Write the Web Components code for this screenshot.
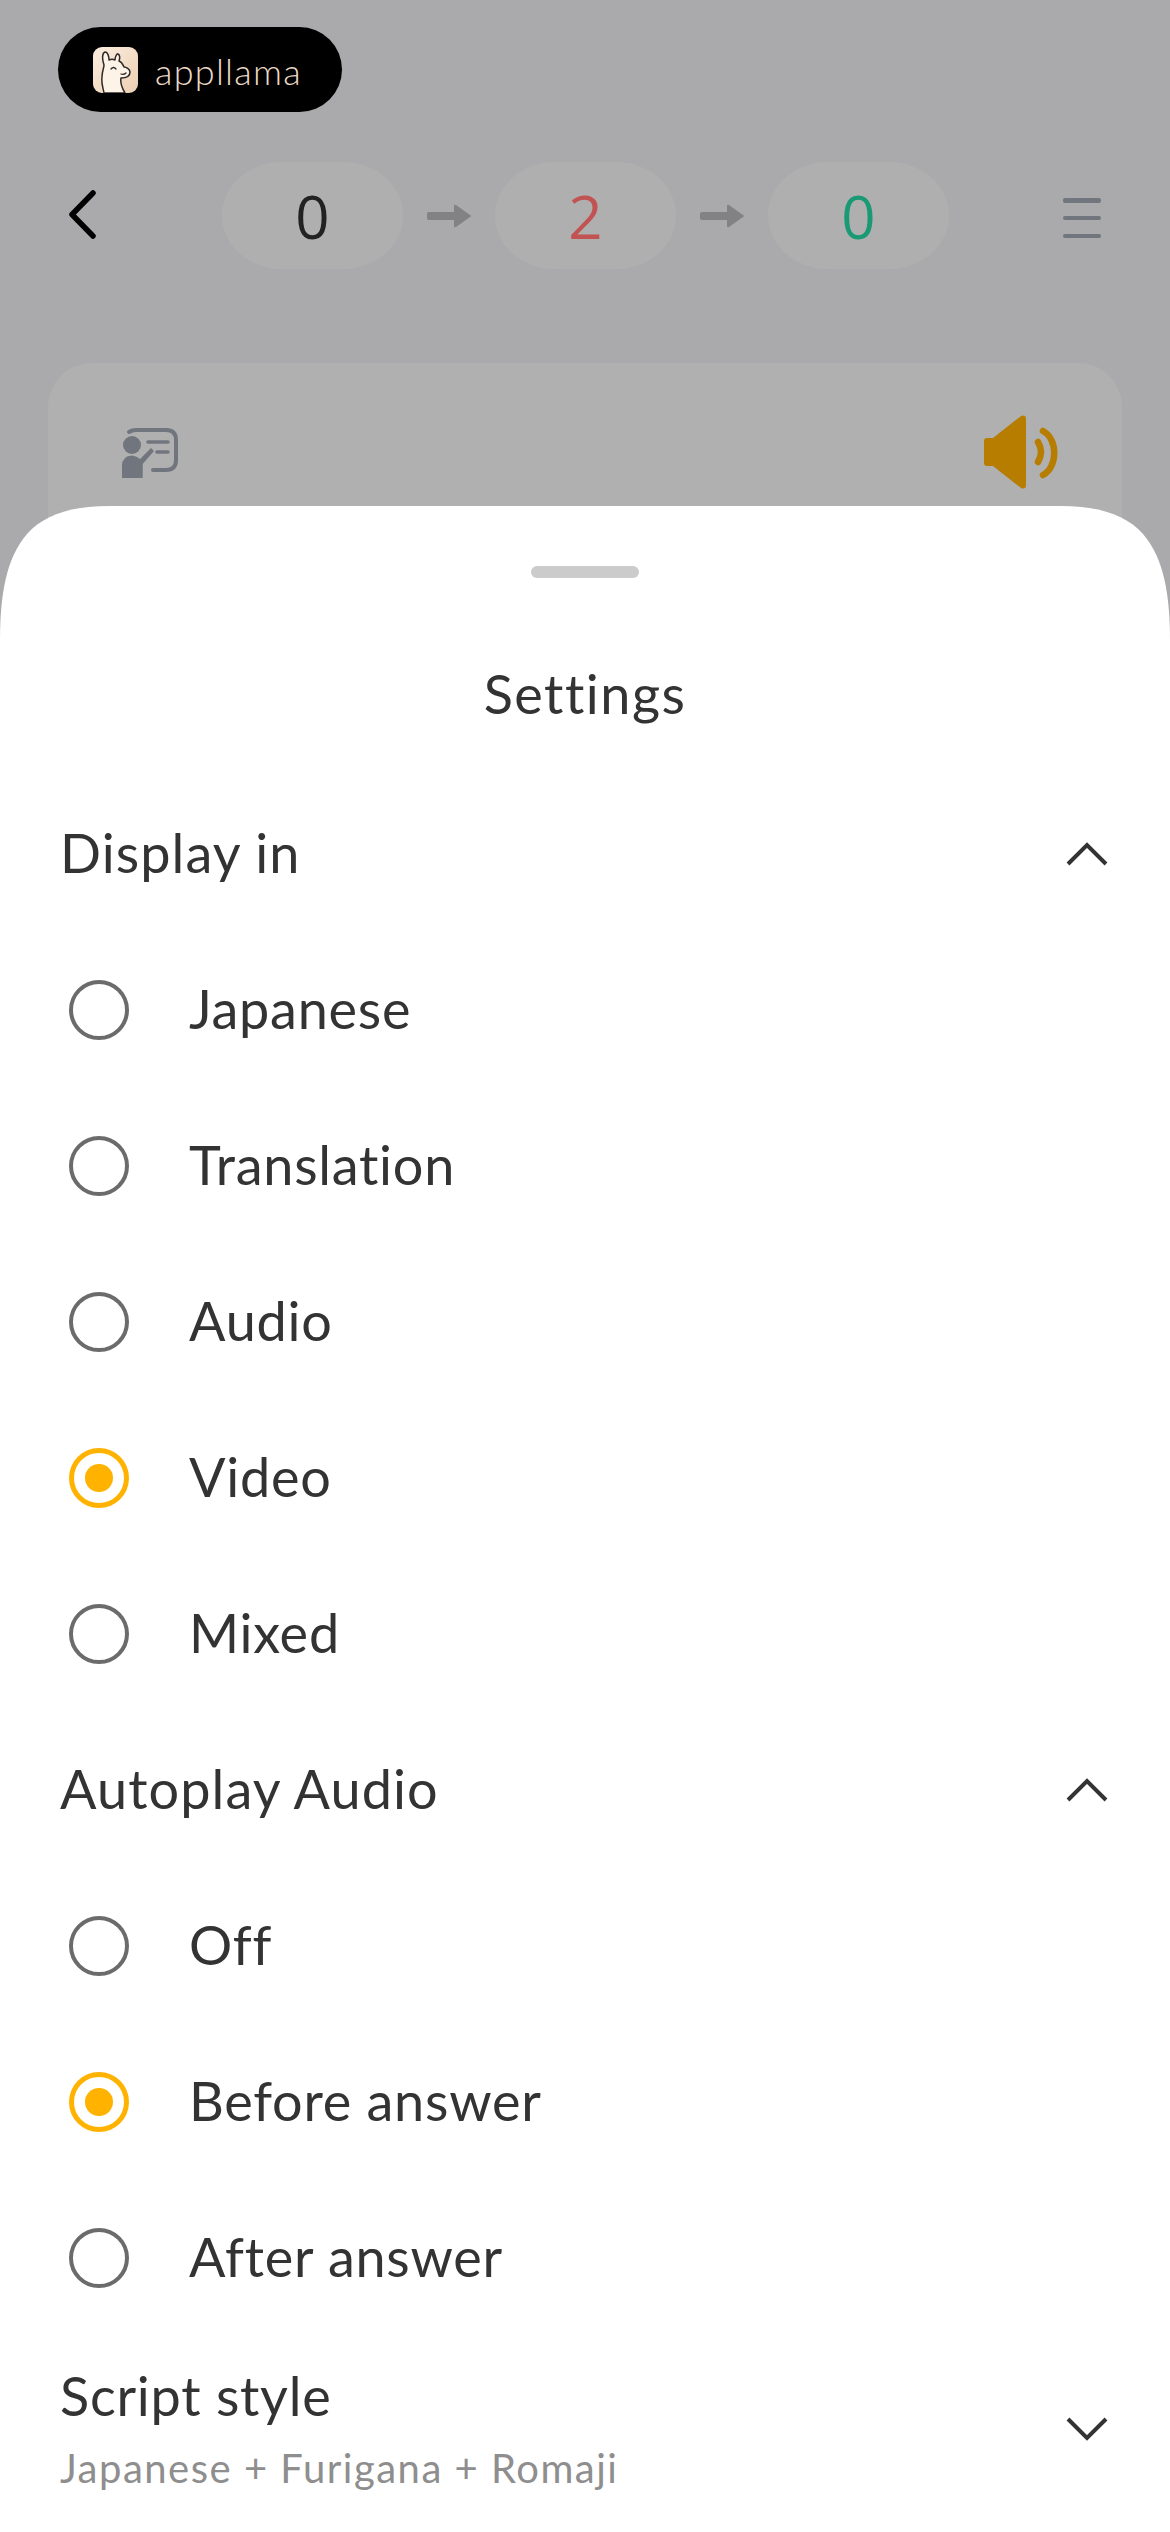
<!DOCTYPE html>
<html>
<head>
<meta charset="utf-8">
<style>
    html, body { margin: 0; padding: 0; }
    body { width: 1170px; height: 2532px; overflow: hidden; position: relative; background: #aaaaac; font-family: Lato, sans-serif; }
</style>
</head>
<body>

<template id="app-logo-template">
    <style>
        :host { display: flex; align-items: center; width: 284px; height: 85px; box-sizing: border-box; padding-left: 35px; gap: 17px; background: #000; border-radius: 43px; }
        svg { display: block; }
        span { color: #ecd9c6; font: 300 36px Lato, sans-serif; letter-spacing: 1.25px; margin-top: 3px; }
    </style>
    <svg width="45" height="46" viewBox="0 0 45 46">
        <defs><linearGradient id="bg" x1="0" y1="0" x2="1" y2="1"><stop offset="0" stop-color="#fbeee0"/><stop offset="1" stop-color="#eccfb2"/></linearGradient></defs>
        <rect width="45" height="46" rx="9" fill="url(#bg)"/>
        <path d="M11 46C10 40 8 36 9 30 9 24 11 21 11 18 9 12 9 6 12 5 15 5 16 10 16 13 18 12 20 12 22 13 22 10 24 6 25 7 27 8 27 11 26 14 29 15 30 18 31 20 33 20 37 22 37 25 37 29 33 31 28 31 27 36 29 41 32 46z" fill="#fdf3e7" stroke="#2f2a28" stroke-width="1.500" stroke-linejoin="round"/>
        <path d="M18 22q2.500-3 5 0M28 27q3 1 5-1" fill="none" stroke="#2f2a28" stroke-width="1.300" stroke-linecap="round"/>
    </svg>
    <span>appllama</span>
</template>

<template id="step-pill-template">
    <style>
        :host { display: flex; align-items: center; justify-content: center; width: 181px; height: 107px; background: #afafaf; border-radius: 60px / 53px; font: 400 60px "Open Sans", sans-serif; color: var(--pill-color, #222); }
    </style>
    <slot></slot>
</template>

<template id="step-arrow-template">
    <style>
        :host { display: block; width: 45px; height: 24px; }
        svg { display: block; }
    </style>
    <svg width="45" height="24" viewBox="0 0 45 24">
        <path d="M2 8H27V2q0-2 2-1L43 11q2 1 0 2L29 23q-2 1-2-1V16H2q-2 0-2-2V10q0-2 2-2z" fill="#828284"/>
    </svg>
</template>

<template id="top-bar-template">
    <style>
        :host { display: flex; align-items: center; width: 1170px; box-sizing: border-box; height: 107px; }
        .back { margin-left: 66px; width: 34px; height: 54px; display: block; }
        .steps { display: flex; align-items: center; gap: 23.500px; margin-left: 122px; }
        .menu { margin-left: 114px; width: 38px; height: 40px; display: flex; flex-direction: column; justify-content: space-between; margin-top: 5px; }
        .menu i { display: block; height: 4.500px; border-radius: 2px; background: #71757e; }
    </style>
    <svg class="back" viewBox="0 0 34 54"><path d="M27 4 6 25.500 27 47" fill="none" stroke="#000" stroke-width="5.500" stroke-linecap="round" stroke-linejoin="round"/></svg>
    <div class="steps"><slot></slot></div>
    <div class="menu"><i></i><i></i><i></i></div>
</template>

<template id="lesson-card-template">
    <style>
        :host { display: block; width: 1074px; height: 300px; margin-left: 48px; background: #b0b0b0; border-radius: 44px; position: relative; }
        .row { display: flex; justify-content: space-between; align-items: center; padding: 52px 63px 0 74px; }
        svg { display: block; }
        .teacher { margin-top: 2px; }
    </style>
    <div class="row">
        <svg class="teacher" width="56" height="50" viewBox="0 0 56 50">
            <path d="M7 4Q10 2 14 2H44Q54 2 54 12V32Q54 42 44 42H31" fill="none" stroke="#71757e" stroke-width="4" stroke-linecap="round"/>
            <circle cx="10" cy="17" r="9" fill="#71757e"/>
            <path d="M0 50V38Q0 28 10 27.500 15 28 18 31L29 20 32 23 20.700 36V50z" fill="#71757e"/>
            <path d="M26 14H46M35 24H46" stroke="#71757e" stroke-width="3.500" stroke-linecap="round"/>
        </svg>
        <svg width="75" height="74" viewBox="0 0 75 74">
            <path d="M0 26Q0 23 3 23H9L37 1Q42-1 42 4V70Q42 75 37 73L9 51H3Q0 51 0 48z" fill="#b67d00"/>
            <path d="M54 27Q60 37 54 47" fill="none" stroke="#b67d00" stroke-width="6.500" stroke-linecap="round"/>
            <path d="M59 16C74 24 74 52 59 60" fill="none" stroke="#b67d00" stroke-width="6.500" stroke-linecap="round"/>
        </svg>
    </div>
</template>

<template id="bottom-sheet-template">
    <style>
        :host { display: block; position: absolute; left: 0; right: 0; top: 506px; bottom: 0; background: #fff; clip-path: path("M0 134C0 90 6 52 27 28C44 9 70 0 110 0H1060C1100 0 1126 9 1143 28C1164 52 1170 90 1170 134V2026H0Z"); overflow: hidden; color: #333; font-family: Lato, sans-serif; font-variant-ligatures: none; letter-spacing: 0.75px; }
        .handle { width: 108px; height: 12px; border-radius: 6px; background: #cbcbcb; margin: 60px auto 0; }
        h2 { margin: 0; font-size: 54px; font-weight: 400; line-height: 74px; letter-spacing: 1.5px; text-align: center; padding-top: 79px; padding-bottom: 45px; }
    </style>
    <div class="handle"></div>
    <h2>Settings</h2>
    <slot></slot>
</template>

<template id="setting-header-template">
    <style>
        :host { display: flex; align-items: center; justify-content: space-between; height: 156px; padding: 0 62px 0 60px; font-size: 54px; letter-spacing: 1.1px; }
        slot { display: block; margin-bottom: 3px; }
        svg { display: block; }
    </style>
    <slot></slot>
    <svg width="42" height="24" viewBox="0 0 42 24"><path d="M2 22 21 3 40 22" fill="none" stroke="#333" stroke-width="4"/></svg>
</template>

<template id="radio-option-template">
    <style>
        :host { display: flex; align-items: center; height: 156px; padding-left: 69px; gap: 60px; font-size: 54px; }
        slot { display: block; margin-bottom: 3px; }
        .dot { width: 60px; height: 60px; box-sizing: border-box; border-radius: 50%; border: 4.500px solid #6b6b6b; display: flex; align-items: center; justify-content: center; }
        :host([checked]) .dot { border: 5px solid #ffb300; }
        :host([checked]) .dot::after { content: ""; width: 28px; height: 28px; border-radius: 50%; background: #ffb300; }
    </style>
    <div class="dot"></div>
    <slot></slot>
</template>

<template id="setting-select-template">
    <style>
        :host { display: flex; align-items: center; justify-content: space-between; padding: 0 62px 0 60px; }
        .main { font-size: 54px; line-height: 74px; }
        .sub { font-size: 40px; line-height: 56px; color: #8e8e8e; margin-top: 7px; letter-spacing: 1.5px; }
        svg { display: block; margin-top: 2px; }
    </style>
    <div>
        <div class="main"><slot></slot></div>
        <div class="sub"><slot name="value"></slot></div>
    </div>
    <svg width="42" height="24" viewBox="0 0 42 24"><path d="M2 2 21 21 40 2" fill="none" stroke="#333" stroke-width="4"/></svg>
</template>

<app-logo style="margin:27px 0 0 58px"></app-logo>
<top-bar style="margin-top:50px">
    <step-pill>0</step-pill>
    <step-arrow></step-arrow>
    <step-pill style="--pill-color:#c25353">2</step-pill>
    <step-arrow></step-arrow>
    <step-pill style="--pill-color:#1a9a74">0</step-pill>
</top-bar>
<lesson-card style="margin-top:94px"></lesson-card>

<bottom-sheet>
    <setting-header>Display in</setting-header>
    <radio-option>Japanese</radio-option>
    <radio-option>Translation</radio-option>
    <radio-option>Audio</radio-option>
    <radio-option checked>Video</radio-option>
    <radio-option>Mixed</radio-option>
    <setting-header>Autoplay Audio</setting-header>
    <radio-option>Off</radio-option>
    <radio-option checked>Before answer</radio-option>
    <radio-option>After answer</radio-option>
    <setting-select style="margin-top:23px">Script style<span slot="value">Japanese + Furigana + Romaji</span></setting-select>
</bottom-sheet>

<script>
    function defineFromTemplate(tag, templateId) {
        let template = document.querySelector("#" + templateId);
        customElements.define(tag, class extends HTMLElement {
            constructor() {
                super();
                this.shadow = this.attachShadow({mode: 'open'});
                this.shadow.appendChild(template.content.cloneNode(true));
            }
        });
    }

    defineFromTemplate("app-logo", "app-logo-template");
    defineFromTemplate("step-pill", "step-pill-template");
    defineFromTemplate("step-arrow", "step-arrow-template");
    defineFromTemplate("top-bar", "top-bar-template");
    defineFromTemplate("lesson-card", "lesson-card-template");
    defineFromTemplate("bottom-sheet", "bottom-sheet-template");
    defineFromTemplate("setting-header", "setting-header-template");
    defineFromTemplate("radio-option", "radio-option-template");
    defineFromTemplate("setting-select", "setting-select-template");
</script>
</body>
</html>
